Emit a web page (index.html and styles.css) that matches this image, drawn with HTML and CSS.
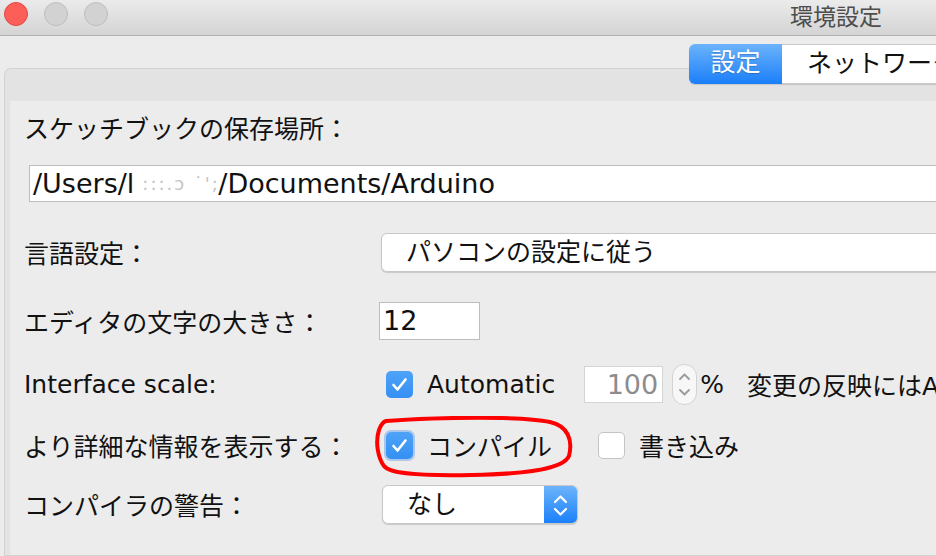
FILE: index.html
```html
<!DOCTYPE html>
<html lang="ja">
<head>
<meta charset="UTF-8" />
<title>環境設定</title>
<link rel="stylesheet" href="styles.css">
</head>
<body>
	<div class="window">
		<!-- title bar -->
		<div class="titlebar">
			<div class="lights">
				<span class="light light-close"></span>
				<span class="light"></span>
				<span class="light"></span>
			</div>
			<div class="title">環境設定</div>
		</div>

		<!-- tabs: div.tab*2 -->
		<div class="tabs">
			<div class="tab tab-active">設定</div>
			<div class="tab">ネットワーク</div>
		</div>

		<div class="panel">
			<div class="pane">
				<div class="label label-top">スケッチブックの保存場所：</div>
				<div class="field field-path">/Users/l<span class="smudge">:::.ɔ ˙';</span>/Documents/Arduino</div>

				<div class="row row-lang">
					<div class="label">言語設定：</div>
					<div class="combo combo-wide">パソコンの設定に従う</div>
				</div>

				<div class="row row-size">
					<div class="label">エディタの文字の大きさ：</div>
					<div class="field field-size">12</div>
				</div>

				<div class="row row-scale">
					<div class="label">Interface scale:</div>
					<div class="check check-first">
						<span class="box box-on"><svg viewBox="0 0 27 27" width="27" height="27"><path d="M7.5 14 L11.5 18.5 L19.5 8.5" fill="none" stroke="#fff" stroke-width="2.6" stroke-linecap="round" stroke-linejoin="round"/></svg></span>
						<span>Automatic</span>
					</div>
					<div class="field field-scale">100</div>
					<div class="spinner"><svg viewBox="0 0 25 41" width="25" height="41"><path d="M8 15 L12.5 10.5 L17 15" fill="none" stroke="#9a9a9a" stroke-width="1.8" stroke-linecap="round" stroke-linejoin="round"/><path d="M8 26 L12.5 30.5 L17 26" fill="none" stroke="#9a9a9a" stroke-width="1.8" stroke-linecap="round" stroke-linejoin="round"/></svg></div>
					<span class="percent">%</span>
					<span class="note">変更の反映にはArduino IDEの再起動が必要</span>
				</div>

				<div class="row row-verbose">
					<div class="label">より詳細な情報を表示する：</div>
					<div class="check check-first">
						<span class="box box-on box-focus"><svg viewBox="0 0 27 27" width="27" height="27"><path d="M7.5 14 L11.5 18.5 L19.5 8.5" fill="none" stroke="#fff" stroke-width="2.6" stroke-linecap="round" stroke-linejoin="round"/></svg></span>
						<span>コンパイル</span>
					</div>
					<div class="check check-upload">
						<span class="box"></span>
						<span>書き込み</span>
					</div>
					<!-- hand drawn red mark over the checkbox -->
					<svg class="mark" viewBox="0 0 204 64" width="204" height="64"><path d="M14 5 C70 1, 150 0, 178 6 C196 10, 201 24, 197 40 C191 54, 150 58, 100 59 C50 60, 18 58, 12 50 C6 42, 3 26, 7 14 C9 8, 11 6, 14 5 Z" fill="none" stroke="#f00" stroke-width="4" stroke-linejoin="round"/></svg>
				</div>

				<div class="row row-warn">
					<div class="label">コンパイラの警告：</div>
					<div class="combo combo-small">
						<span class="combo-text">なし</span>
						<span class="combo-cap"><svg viewBox="0 0 33 39" width="33" height="39"><path d="M11 16 L16.5 10.5 L22 16" fill="none" stroke="#fff" stroke-width="2.2" stroke-linecap="round" stroke-linejoin="round"/><path d="M11 23 L16.5 28.5 L22 23" fill="none" stroke="#fff" stroke-width="2.2" stroke-linecap="round" stroke-linejoin="round"/></svg></span>
					</div>
				</div>
			</div>
		</div>
	</div>
</body>
</html>
```

FILE: styles.css
```css
html, body {margin: 0; padding: 0;}
body {background-color: #ececec; overflow: hidden; font-family: "DejaVu Sans", "Noto Sans CJK JP", sans-serif; font-size: 25px; color: #111;}
.window {width: 936px; height: 556px; display: flex; flex-direction: column; overflow: hidden;}

/* title bar */
.titlebar {height: 35px; flex: none; display: flex; align-items: center; justify-content: space-between; background: linear-gradient(#ebebeb, #d4d4d4); border-bottom: 1px solid #b2b2b2;}
.lights {display: flex; gap: 16px; padding-left: 4px; margin-top: -7px;}
.light {width: 22px; height: 22px; border-radius: 50%; background-color: #d2d2d2; border: 1px solid #bdbdbd;}
.light-close {background-color: #fc5f57; border-color: #df4a44;}
.title {margin-right: 54px; margin-top: -5px; line-height: 1; font-family: "Noto Sans CJK JP", sans-serif; font-size: 23px; color: #4d4d4d;}

/* tabs */
.tabs {flex: none; display: flex; padding-left: 689px; margin-top: 8px; margin-bottom: -16px; position: relative; z-index: 1; white-space: nowrap;}
.tab {flex: none; height: 40px; line-height: 38px; box-sizing: border-box; background-color: #fff; border: 1px solid #c9c9c9; border-left: none; padding: 0 40px 0 25px; box-shadow: 0 1px 1px rgba(0,0,0,.12);}
.tab-active {width: 93px; padding: 0; text-align: center; color: #fff; border: none; border-radius: 6px 0 0 6px; background: linear-gradient(#6cb3fb, #1a7ff9); text-shadow: 0 1px 1px rgba(0,0,0,.2);}

/* panel */
.panel {flex: 1; margin-left: 4px; border: 1px solid #d2d2d2; border-right: none; border-radius: 7px 0 0 0; background-color: #e3e3e3; padding: 32px 0 0 5px; display: flex;}
.pane {flex: 1; background-color: #ececec; padding: 11px 0 0 14px;}

.label {flex: none; width: 357px; white-space: nowrap;}
.label-top {line-height: 36px;}

.field {box-sizing: border-box; background-color: #fff; border: 1px solid #bdbdbd; font-size: 27px; white-space: nowrap;}
.field-path {margin: 17px -20px 0 5px; height: 37px; line-height: 35px; padding-left: 3px;}
.smudge {display: inline-block; width: 84px; color: #c4c4c4; font-size: 18px; letter-spacing: 2px; vertical-align: top; padding-left: 8px; box-sizing: border-box;}
.field-size {width: 101px; height: 38px; line-height: 36px; padding-left: 3px; margin-left: -2px;}
.field-scale {width: 79px; height: 37px; line-height: 35px; text-align: right; padding-right: 4px; color: #8c8c8c; border-color: #d4d4d4; margin-left: 29px;}

.row {display: flex; align-items: center; height: 40px; white-space: nowrap;}
.row-lang {margin-top: 30px;}
.row-size {margin-top: 29px;}
.row-scale {margin-top: 23px;}
.row-verbose {margin-top: 21px; position: relative;}
.row-warn {margin-top: 19px;}

/* combo boxes */
.combo {box-sizing: border-box; height: 39px; background-color: #fff; border: 1px solid #c8c8c8; border-radius: 6px; box-shadow: 0 1px 1px rgba(0,0,0,.15);}
.combo-wide {flex: 1; margin-right: -20px; line-height: 37px; padding-left: 24px;}
.combo-small {width: 196px; margin-left: 1px; display: flex; overflow: hidden;}
.combo-text {flex: 1; line-height: 37px; padding-left: 24px;}
.combo-cap {width: 33px; background: linear-gradient(#6db4fb, #1a80fa); display: flex;}

/* checkboxes */
.check {display: flex; align-items: center; gap: 14px;}
.check-first {margin-left: 5px;}
.check-upload {margin-left: 46px;}
.box {width: 27px; height: 27px; box-sizing: border-box; border-radius: 5px; background-color: #fff; border: 1px solid #c4c4c4; display: flex;}
.box-on {border: none; background: linear-gradient(#4ea3f8, #3590f3);}
.box-focus {box-shadow: 0 0 0 2px rgba(120,170,235,.55);}

.spinner {width: 25px; height: 41px; box-sizing: border-box; margin-left: 9px; border: 1px solid #d3d3d3; border-radius: 12px; background-color: #f7f7f7; display: flex; align-items: center; justify-content: center;}
.spinner svg {flex: none;}
.percent {margin-left: 3px;}
.note {margin-left: 23px;}

.mark {position: absolute; left: 348px; top: -9px;}
```
